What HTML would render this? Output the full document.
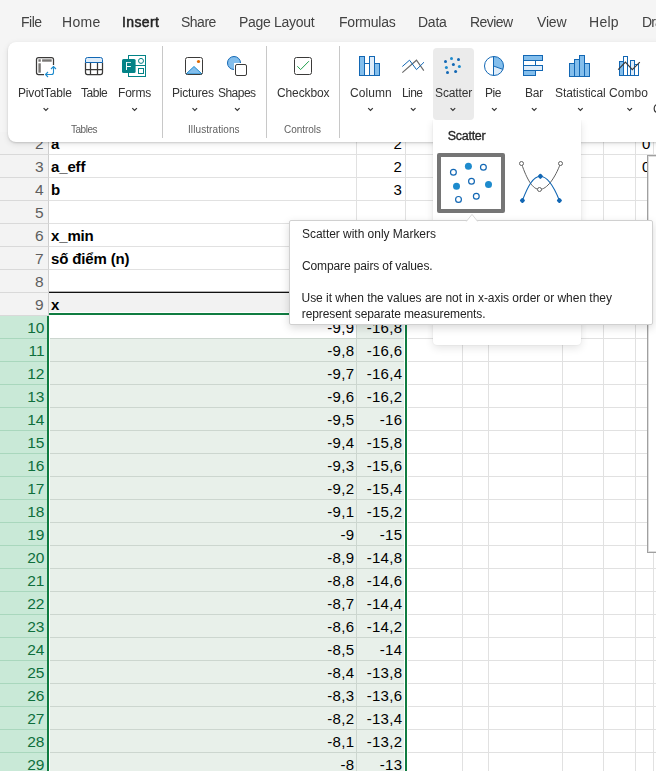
<!DOCTYPE html><html lang="vi"><head><meta charset="utf-8"><title>Excel</title><style>
*{box-sizing:border-box;margin:0;padding:0}
html,body{width:656px;height:771px;overflow:hidden;background:#f5f5f5;font-family:"Liberation Sans",sans-serif;}
body{position:relative}
.abs{position:absolute}
.t{position:absolute;white-space:nowrap;line-height:1;transform-origin:0 0}
.tab,.lbl,.grp{will-change:transform}
.tab{position:absolute;top:14px;font-size:14px;line-height:16px;color:#424242;white-space:nowrap;transform-origin:0 50%}
.lbl{position:absolute;top:86px;font-size:12px;line-height:14px;color:#333;white-space:nowrap;transform-origin:0 50%}
.grp{position:absolute;top:124px;font-size:10px;line-height:12px;color:#616161;white-space:nowrap;transform-origin:0 50%}
.chev{position:absolute;top:107px;width:8px;height:5px}
.div{position:absolute;top:46px;width:1px;height:92px;background:#c8c8c8}
.ico{position:absolute}
.rh{position:absolute;left:0;width:49px;height:23px;font-size:15.5px;letter-spacing:0px;line-height:24px;text-align:right;padding-right:4.5px;color:#5e5e5e;background:#f3f3f3;border-bottom:1px solid #d9d9d9;border-right:1px solid #cfcfcf}
.rh.sel{width:48px;padding-right:3.5px;background:#c9e9d7;color:#0e6f3c;border-bottom:1px solid #a9d7bd;border-right:none}
.c{position:absolute;height:23px;font-size:15px;line-height:23px;color:#000;white-space:nowrap}
.c.r{letter-spacing:.28px}
.b{font-weight:bold;letter-spacing:-.15px}
.r{text-align:right}
.tip{position:absolute;font-size:12px;line-height:16px;color:#242424;white-space:nowrap;transform-origin:0 50%}
</style></head><body>
<div class="abs" style="left:0;top:132px;width:656px;height:640px;background:#fff"></div>
<div class="abs" style="left:49px;top:293px;width:357px;height:22px;background:#f2f2f2"></div>
<div class="abs" style="left:50px;top:316px;width:354px;height:455px;background:#e8f0ea"></div>
<div class="abs" style="left:49px;top:316px;width:307px;height:22px;background:#fff"></div>
<div class="abs" style="left:356px;top:131px;width:1px;height:640px;background:#e1e1e1"></div>
<div class="abs" style="left:405px;top:131px;width:1px;height:640px;background:#e1e1e1"></div>
<div class="abs" style="left:462px;top:131px;width:1px;height:640px;background:#e1e1e1"></div>
<div class="abs" style="left:488px;top:131px;width:1px;height:640px;background:#e1e1e1"></div>
<div class="abs" style="left:562px;top:131px;width:1px;height:640px;background:#e1e1e1"></div>
<div class="abs" style="left:603px;top:131px;width:1px;height:640px;background:#e1e1e1"></div>
<div class="abs" style="left:635px;top:131px;width:1px;height:640px;background:#e1e1e1"></div>
<div class="abs" style="left:653px;top:131px;width:1px;height:640px;background:#e1e1e1"></div>
<div class="abs" style="left:49px;top:154px;width:607px;height:1px;background:#e1e1e1"></div>
<div class="abs" style="left:49px;top:177px;width:607px;height:1px;background:#e1e1e1"></div>
<div class="abs" style="left:49px;top:200px;width:607px;height:1px;background:#e1e1e1"></div>
<div class="abs" style="left:49px;top:223px;width:607px;height:1px;background:#e1e1e1"></div>
<div class="abs" style="left:49px;top:246px;width:607px;height:1px;background:#e1e1e1"></div>
<div class="abs" style="left:49px;top:269px;width:607px;height:1px;background:#e1e1e1"></div>
<div class="abs" style="left:49px;top:292px;width:607px;height:1px;background:#e1e1e1"></div>
<div class="abs" style="left:49px;top:315px;width:607px;height:1px;background:#e1e1e1"></div>
<div class="abs" style="left:49px;top:338px;width:607px;height:1px;background:#e1e1e1"></div>
<div class="abs" style="left:49px;top:361px;width:607px;height:1px;background:#e1e1e1"></div>
<div class="abs" style="left:49px;top:384px;width:607px;height:1px;background:#e1e1e1"></div>
<div class="abs" style="left:49px;top:407px;width:607px;height:1px;background:#e1e1e1"></div>
<div class="abs" style="left:49px;top:430px;width:607px;height:1px;background:#e1e1e1"></div>
<div class="abs" style="left:49px;top:453px;width:607px;height:1px;background:#e1e1e1"></div>
<div class="abs" style="left:49px;top:476px;width:607px;height:1px;background:#e1e1e1"></div>
<div class="abs" style="left:49px;top:499px;width:607px;height:1px;background:#e1e1e1"></div>
<div class="abs" style="left:49px;top:522px;width:607px;height:1px;background:#e1e1e1"></div>
<div class="abs" style="left:49px;top:545px;width:607px;height:1px;background:#e1e1e1"></div>
<div class="abs" style="left:49px;top:568px;width:607px;height:1px;background:#e1e1e1"></div>
<div class="abs" style="left:49px;top:591px;width:607px;height:1px;background:#e1e1e1"></div>
<div class="abs" style="left:49px;top:614px;width:607px;height:1px;background:#e1e1e1"></div>
<div class="abs" style="left:49px;top:637px;width:607px;height:1px;background:#e1e1e1"></div>
<div class="abs" style="left:49px;top:660px;width:607px;height:1px;background:#e1e1e1"></div>
<div class="abs" style="left:49px;top:683px;width:607px;height:1px;background:#e1e1e1"></div>
<div class="abs" style="left:49px;top:706px;width:607px;height:1px;background:#e1e1e1"></div>
<div class="abs" style="left:49px;top:729px;width:607px;height:1px;background:#e1e1e1"></div>
<div class="abs" style="left:49px;top:752px;width:607px;height:1px;background:#e1e1e1"></div>
<div class="abs" style="left:50px;top:338px;width:354px;height:1px;background:#ccd6cf"></div>
<div class="abs" style="left:50px;top:361px;width:354px;height:1px;background:#ccd6cf"></div>
<div class="abs" style="left:50px;top:384px;width:354px;height:1px;background:#ccd6cf"></div>
<div class="abs" style="left:50px;top:407px;width:354px;height:1px;background:#ccd6cf"></div>
<div class="abs" style="left:50px;top:430px;width:354px;height:1px;background:#ccd6cf"></div>
<div class="abs" style="left:50px;top:453px;width:354px;height:1px;background:#ccd6cf"></div>
<div class="abs" style="left:50px;top:476px;width:354px;height:1px;background:#ccd6cf"></div>
<div class="abs" style="left:50px;top:499px;width:354px;height:1px;background:#ccd6cf"></div>
<div class="abs" style="left:50px;top:522px;width:354px;height:1px;background:#ccd6cf"></div>
<div class="abs" style="left:50px;top:545px;width:354px;height:1px;background:#ccd6cf"></div>
<div class="abs" style="left:50px;top:568px;width:354px;height:1px;background:#ccd6cf"></div>
<div class="abs" style="left:50px;top:591px;width:354px;height:1px;background:#ccd6cf"></div>
<div class="abs" style="left:50px;top:614px;width:354px;height:1px;background:#ccd6cf"></div>
<div class="abs" style="left:50px;top:637px;width:354px;height:1px;background:#ccd6cf"></div>
<div class="abs" style="left:50px;top:660px;width:354px;height:1px;background:#ccd6cf"></div>
<div class="abs" style="left:50px;top:683px;width:354px;height:1px;background:#ccd6cf"></div>
<div class="abs" style="left:50px;top:706px;width:354px;height:1px;background:#ccd6cf"></div>
<div class="abs" style="left:50px;top:729px;width:354px;height:1px;background:#ccd6cf"></div>
<div class="abs" style="left:50px;top:752px;width:354px;height:1px;background:#ccd6cf"></div>
<div class="abs" style="left:356px;top:316px;width:1px;height:455px;background:#ccd6cf"></div>
<div class="abs" style="left:49px;top:291px;width:357px;height:1px;background:rgba(0,0,0,.3)"></div>
<div class="abs" style="left:49px;top:292px;width:357px;height:1px;background:#111"></div>
<div class="abs" style="left:49px;top:312px;width:359px;height:1px;background:#fff"></div>
<div class="abs" style="left:49px;top:315px;width:356px;height:1px;background:#fff"></div>
<div class="abs" style="left:407px;top:312px;width:1px;height:459px;background:#fff"></div>
<div class="abs" style="left:49px;top:313px;width:358px;height:2px;background:#107c41"></div>
<div class="abs" style="left:405px;top:313px;width:2px;height:458px;background:#107c41"></div>
<div class="abs" style="left:404px;top:315px;width:1px;height:456px;background:#fff"></div>
<div class="rh" style="top:132px">2</div>
<div class="rh" style="top:155px">3</div>
<div class="rh" style="top:178px">4</div>
<div class="rh" style="top:201px">5</div>
<div class="rh" style="top:224px">6</div>
<div class="rh" style="top:247px">7</div>
<div class="rh" style="top:270px">8</div>
<div class="rh" style="top:293px">9</div>
<div class="rh sel" style="top:316px">10</div>
<div class="rh sel" style="top:339px">11</div>
<div class="rh sel" style="top:362px">12</div>
<div class="rh sel" style="top:385px">13</div>
<div class="rh sel" style="top:408px">14</div>
<div class="rh sel" style="top:431px">15</div>
<div class="rh sel" style="top:454px">16</div>
<div class="rh sel" style="top:477px">17</div>
<div class="rh sel" style="top:500px">18</div>
<div class="rh sel" style="top:523px">19</div>
<div class="rh sel" style="top:546px">20</div>
<div class="rh sel" style="top:569px">21</div>
<div class="rh sel" style="top:592px">22</div>
<div class="rh sel" style="top:615px">23</div>
<div class="rh sel" style="top:638px">24</div>
<div class="rh sel" style="top:661px">25</div>
<div class="rh sel" style="top:684px">26</div>
<div class="rh sel" style="top:707px">27</div>
<div class="rh sel" style="top:730px">28</div>
<div class="rh sel" style="top:753px">29</div>
<div class="abs" style="left:47px;top:316px;width:2px;height:455px;background:#107c41"></div>
<div class="abs" style="left:49px;top:338px;width:1px;height:433px;background:#fff"></div>
<div class="c b" style="left:51px;top:132px">a</div>
<div class="c b" style="left:51px;top:155px">a_eff</div>
<div class="c b" style="left:51px;top:178px">b</div>
<div class="c b" style="left:51px;top:224px">x_min</div>
<div class="c b" style="left:51px;top:247px">số điểm (n)</div>
<div class="c b" style="left:51px;top:293px">x</div>
<div class="c r" style="left:357px;width:45px;top:132px">2</div>
<div class="c r" style="left:357px;width:45px;top:155px">2</div>
<div class="c r" style="left:357px;width:45px;top:178px">3</div>
<div class="c" style="left:642px;top:132px">0</div>
<div class="c" style="left:642px;top:155px">0</div>
<div class="c r" style="left:257px;width:97.3px;top:316px">-9,9</div>
<div class="c r" style="left:357px;width:45.3px;top:316px">-16,8</div>
<div class="c r" style="left:257px;width:97.3px;top:339px">-9,8</div>
<div class="c r" style="left:357px;width:45.3px;top:339px">-16,6</div>
<div class="c r" style="left:257px;width:97.3px;top:362px">-9,7</div>
<div class="c r" style="left:357px;width:45.3px;top:362px">-16,4</div>
<div class="c r" style="left:257px;width:97.3px;top:385px">-9,6</div>
<div class="c r" style="left:357px;width:45.3px;top:385px">-16,2</div>
<div class="c r" style="left:257px;width:97.3px;top:408px">-9,5</div>
<div class="c r" style="left:357px;width:45.3px;top:408px">-16</div>
<div class="c r" style="left:257px;width:97.3px;top:431px">-9,4</div>
<div class="c r" style="left:357px;width:45.3px;top:431px">-15,8</div>
<div class="c r" style="left:257px;width:97.3px;top:454px">-9,3</div>
<div class="c r" style="left:357px;width:45.3px;top:454px">-15,6</div>
<div class="c r" style="left:257px;width:97.3px;top:477px">-9,2</div>
<div class="c r" style="left:357px;width:45.3px;top:477px">-15,4</div>
<div class="c r" style="left:257px;width:97.3px;top:500px">-9,1</div>
<div class="c r" style="left:357px;width:45.3px;top:500px">-15,2</div>
<div class="c r" style="left:257px;width:97.3px;top:523px">-9</div>
<div class="c r" style="left:357px;width:45.3px;top:523px">-15</div>
<div class="c r" style="left:257px;width:97.3px;top:546px">-8,9</div>
<div class="c r" style="left:357px;width:45.3px;top:546px">-14,8</div>
<div class="c r" style="left:257px;width:97.3px;top:569px">-8,8</div>
<div class="c r" style="left:357px;width:45.3px;top:569px">-14,6</div>
<div class="c r" style="left:257px;width:97.3px;top:592px">-8,7</div>
<div class="c r" style="left:357px;width:45.3px;top:592px">-14,4</div>
<div class="c r" style="left:257px;width:97.3px;top:615px">-8,6</div>
<div class="c r" style="left:357px;width:45.3px;top:615px">-14,2</div>
<div class="c r" style="left:257px;width:97.3px;top:638px">-8,5</div>
<div class="c r" style="left:357px;width:45.3px;top:638px">-14</div>
<div class="c r" style="left:257px;width:97.3px;top:661px">-8,4</div>
<div class="c r" style="left:357px;width:45.3px;top:661px">-13,8</div>
<div class="c r" style="left:257px;width:97.3px;top:684px">-8,3</div>
<div class="c r" style="left:357px;width:45.3px;top:684px">-13,6</div>
<div class="c r" style="left:257px;width:97.3px;top:707px">-8,2</div>
<div class="c r" style="left:357px;width:45.3px;top:707px">-13,4</div>
<div class="c r" style="left:257px;width:97.3px;top:730px">-8,1</div>
<div class="c r" style="left:357px;width:45.3px;top:730px">-13,2</div>
<div class="c r" style="left:257px;width:97.3px;top:753px">-8</div>
<div class="c r" style="left:357px;width:45.3px;top:753px">-13</div>
<div class="abs" style="left:647px;top:155px;width:20px;height:398px;background:#fff;border:1px solid #a0a0a0;box-shadow:inset 0 0 0 1px rgba(0,0,0,.13)"></div>
<div class="tab" style="left:21.00px;letter-spacing:-0.500px;">File</div>
<div class="tab" style="left:62.40px;letter-spacing:0.283px;">Home</div>
<div class="tab" style="left:121.75px;letter-spacing:0.390px;color:#242424;-webkit-text-stroke:.5px #242424;">Insert</div>
<div class="tab" style="left:181.25px;letter-spacing:-0.500px;">Share</div>
<div class="tab" style="left:239.00px;letter-spacing:-0.300px;">Page Layout</div>
<div class="tab" style="left:338.80px;letter-spacing:-0.229px;">Formulas</div>
<div class="tab" style="left:418.00px;letter-spacing:-0.250px;">Data</div>
<div class="tab" style="left:470.20px;letter-spacing:-0.540px;">Review</div>
<div class="tab" style="left:537.05px;letter-spacing:-0.183px;">View</div>
<div class="tab" style="left:589.40px;letter-spacing:0.283px;">Help</div>
<div class="tab" style="left:642.40px;letter-spacing:-0.900px;">Draw</div>
<div class="abs" style="left:8px;top:42px;width:700px;height:100px;background:#fff;border-radius:8px;box-shadow:0 1px 2px rgba(0,0,0,.14),0 2px 6px rgba(0,0,0,.10)"></div>
<div class="abs" style="left:433px;top:48px;width:41px;height:72px;background:#ebebeb;border-radius:4px"></div>
<div class="div" style="left:162px"></div>
<div class="div" style="left:266px"></div>
<div class="div" style="left:339px"></div>
<div class="lbl" style="left:17.50px;letter-spacing:-0.167px;">PivotTable</div>
<div class="lbl" style="left:81.25px;letter-spacing:-0.475px;">Table</div>
<div class="lbl" style="left:117.50px;letter-spacing:-0.200px;">Forms</div>
<div class="lbl" style="left:172.30px;letter-spacing:-0.200px;">Pictures</div>
<div class="lbl" style="left:218.00px;letter-spacing:-0.530px;">Shapes</div>
<div class="lbl" style="left:276.50px;letter-spacing:-0.121px;">Checkbox</div>
<div class="lbl" style="left:349.70px;letter-spacing:0.050px;">Column</div>
<div class="lbl" style="left:402.40px;letter-spacing:-0.583px;">Line</div>
<div class="lbl" style="left:434.60px;letter-spacing:-0.108px;">Scatter</div>
<div class="lbl" style="left:485.40px;letter-spacing:-0.450px;">Pie</div>
<div class="lbl" style="left:524.70px;letter-spacing:-0.250px;">Bar</div>
<div class="lbl" style="left:555.10px;letter-spacing:-0.060px;">Statistical</div>
<div class="lbl" style="left:609.40px;letter-spacing:0.088px;">Combo</div>
<div class="lbl" style="left:652.5px;top:102px">C</div>
<div class="grp" style="left:71.45px;letter-spacing:-0.480px;">Tables</div>
<div class="grp" style="left:188.30px;letter-spacing:0.087px;">Illustrations</div>
<div class="grp" style="left:284.30px;letter-spacing:-0.043px;">Controls</div>
<svg class="ico" style="left:0;top:0" width="656" height="160" viewBox="0 0 656 160">
<path d="M43.6 108.2 L45.9 110.5 L48.2 108.2" fill="none" stroke="#333" stroke-width="1.2"/>
<path d="M132.3 108.2 L134.6 110.5 L136.9 108.2" fill="none" stroke="#333" stroke-width="1.2"/>
<path d="M192.5 108.2 L194.8 110.5 L197.1 108.2" fill="none" stroke="#333" stroke-width="1.2"/>
<path d="M235.0 108.2 L237.3 110.5 L239.6 108.2" fill="none" stroke="#333" stroke-width="1.2"/>
<path d="M368.2 108.2 L370.5 110.5 L372.8 108.2" fill="none" stroke="#333" stroke-width="1.2"/>
<path d="M410.9 108.2 L413.2 110.5 L415.5 108.2" fill="none" stroke="#333" stroke-width="1.2"/>
<path d="M450.6 108.2 L452.9 110.5 L455.2 108.2" fill="none" stroke="#333" stroke-width="1.2"/>
<path d="M492.0 108.2 L494.3 110.5 L496.6 108.2" fill="none" stroke="#333" stroke-width="1.2"/>
<path d="M531.9 108.2 L534.2 110.5 L536.5 108.2" fill="none" stroke="#333" stroke-width="1.2"/>
<path d="M578.1 108.2 L580.4 110.5 L582.7 108.2" fill="none" stroke="#333" stroke-width="1.2"/>
<path d="M627.4 108.2 L629.7 110.5 L632.0 108.2" fill="none" stroke="#333" stroke-width="1.2"/>
<path d="M53.5 65 V59.5 a2 2 0 0 0 -2 -2 H38.5 a2 2 0 0 0 -2 2 V72.5 a2 2 0 0 0 2 2 H44" fill="none" stroke="#3b3a39" stroke-width="1.25"/>
<rect x="38.4" y="59.3" width="2.4" height="2.4" fill="#797775"/><rect x="42.1" y="59.3" width="9.6" height="2.4" fill="#797775"/><rect x="38.4" y="63.3" width="2.4" height="9.4" fill="#797775"/>
<path d="M53.5 66.5 V72.5 a2 2 0 0 1 -2 2 H46 M51 69 L53.5 66.5 L56 69 M48 72 L45.5 74.5 L48 77" fill="none" stroke="#1e8bcd" stroke-width="1.1"/>
<path d="M85.5 62.5 V72.5 a2 2 0 0 0 2 2 H100.5 a2 2 0 0 0 2 -2 V62.5 M90.5 62.5 V74.5 M97.5 62.5 V74.5 M85.5 69.5 H102.5" fill="none" stroke="#3b3a39" stroke-width="1.25"/>
<path d="M85.5 62.5 V59.5 a2 2 0 0 1 2 -2 H100.5 a2 2 0 0 1 2 2 V62.5 Z" fill="#deecf9" stroke="#1267b4" stroke-width="1"/>
<rect x="128.5" y="55.5" width="17" height="21" fill="#fff" stroke="#038387" stroke-width="1"/>
<path d="M135 65.5 H145.5" stroke="#038387" stroke-width="1" fill="none"/>
<circle cx="141" cy="60.9" r="2.5" fill="none" stroke="#038387" stroke-width="1"/>
<rect x="138.5" y="68.5" width="5" height="5" fill="none" stroke="#038387" stroke-width="1"/>
<rect x="122" y="59" width="13.6" height="14" rx="1.5" fill="#038387"/>
<text x="125.2" y="70" font-family="Liberation Sans, sans-serif" font-size="11.3" textLength="6.1" lengthAdjust="spacingAndGlyphs" fill="#fff">F</text>
<path d="M186 74 L194 66.5 L202 74 Z" fill="#83beec" stroke="#1e8bcd" stroke-width="1" stroke-linejoin="round"/>
<rect x="185.5" y="57.5" width="17" height="17" rx="2" fill="none" stroke="#3b3a39" stroke-width="1"/>
<circle cx="198.5" cy="61.5" r="1.6" fill="#e06a00"/>
<circle cx="234" cy="63" r="6.5" fill="#83beec" stroke="#1267b4" stroke-width="1"/>
<rect x="234" y="63" width="14" height="14" fill="#fff"/>
<rect x="235.5" y="64.5" width="11" height="11" rx="1.5" fill="#fff" stroke="#3b3a39" stroke-width="1"/>
<rect x="294.5" y="57.5" width="17" height="17" rx="2" fill="none" stroke="#3b3a39" stroke-width="1"/>
<path d="M297.3 66.2 L300.6 69.6 L308.9 61.2" fill="none" stroke="#1e9e4a" stroke-width="1"/>
<rect x="359.5" y="56.5" width="5" height="19" fill="#83beec" stroke="#1267b4"/><rect x="364.5" y="63.5" width="5" height="12" fill="#fff" stroke="#1267b4"/><rect x="369.5" y="56.5" width="5" height="19" fill="#deecf9" stroke="#1267b4"/><rect x="374.5" y="63.5" width="5" height="12" fill="#83beec" stroke="#1267b4"/>
<path d="M402.3 72.6 L416.5 60.2 L423.8 70.6" fill="none" stroke="#6a6a6a" stroke-width="1.15"/>
<path d="M402.3 66.5 L409.5 60.2 L416.5 69.6 L424 62.2" fill="none" stroke="#1267b4" stroke-width="1"/>
<circle cx="451.5" cy="58.5" r="1.5" fill="#1e8bcd"/>
<circle cx="458.5" cy="59.4" r="1.5" fill="#1267b4"/>
<circle cx="445.5" cy="61.5" r="1.5" fill="#1267b4"/>
<circle cx="453.4" cy="64.4" r="1.5" fill="#1267b4"/>
<circle cx="446.4" cy="67.5" r="1.5" fill="#1e8bcd"/>
<circle cx="459.4" cy="66.6" r="1.5" fill="#1e8bcd"/>
<circle cx="447.5" cy="72.5" r="1.5" fill="#1267b4"/>
<circle cx="455.6" cy="71.6" r="1.5" fill="#1267b4"/>
<path d="M493.5 56.5 A9.5 9.5 0 0 1 502.9 69.4 L493.5 66 Z" fill="#83beec"/><path d="M502.9 69.4 A9.5 9.5 0 0 1 493.5 75.5 L493.5 66 Z" fill="#deecf9"/>
<circle cx="494" cy="66" r="9.5" fill="none" stroke="#1267b4" stroke-width="1"/><path d="M493.5 56.5 V75.5 M493.5 66 L502.9 69.4" fill="none" stroke="#1267b4" stroke-width="1"/>
<rect x="523.5" y="55.5" width="19" height="5" fill="#83beec" stroke="#1267b4"/><rect x="523.5" y="60.5" width="12" height="5" fill="#fff" stroke="#1267b4"/><rect x="523.5" y="65.5" width="19" height="5" fill="#deecf9" stroke="#1267b4"/><rect x="523.5" y="70.5" width="12" height="5" fill="#83beec" stroke="#1267b4"/>
<rect x="569.5" y="63.5" width="5" height="13" fill="#83beec" stroke="#1267b4"/><rect x="574.5" y="59.5" width="5" height="17" fill="#83beec" stroke="#1267b4"/><rect x="579.5" y="55.5" width="5" height="21" fill="#83beec" stroke="#1267b4"/><rect x="584.5" y="63.5" width="5" height="13" fill="#83beec" stroke="#1267b4"/>
<rect x="619.5" y="61.5" width="4" height="14" fill="#83beec" stroke="#1267b4"/><rect x="623.5" y="56.5" width="4" height="19" fill="#fff" stroke="#1267b4"/><rect x="630.5" y="60.5" width="4" height="15" fill="#deecf9" stroke="#1267b4"/><rect x="634.5" y="64.5" width="4" height="11" fill="#fff" stroke="#1267b4"/><path d="M627.5 75.5 H630.5" stroke="#1267b4"/>
<path d="M618.2 69.6 L625.4 62.1 L632.3 69.6 L639.8 62.1" fill="none" stroke="#3b3a39" stroke-width="1.2"/>
</svg>
<div class="abs" style="left:433px;top:120px;width:148px;height:225px;background:#fff;border-radius:0 0 4px 4px;box-shadow:0 3px 9px rgba(0,0,0,.11),0 0 2px rgba(0,0,0,.09);clip-path:inset(0 -30px -30px -30px)"></div>
<div class="t" style="left:447.70px;letter-spacing:-0.267px;top:129px;font-size:12.5px;line-height:14px;color:#242424;-webkit-text-stroke:.3px #242424">Scatter</div>
<div class="abs" style="left:437px;top:153px;width:68px;height:60px;border:4px solid #757575;border-radius:2px;background:#fff"></div>
<svg class="ico" style="left:433px;top:120px" width="160" height="100" viewBox="433 120 160 100">
<circle cx="468.4" cy="166.3" r="3.5" fill="#1e8bcd"/>
<circle cx="483.4" cy="167.3" r="2.9" fill="#fff" stroke="#1267b4" stroke-width="1.2"/>
<circle cx="453.4" cy="172.3" r="2.9" fill="#fff" stroke="#1267b4" stroke-width="1.2"/>
<circle cx="471.5" cy="181.3" r="2.9" fill="#fff" stroke="#1267b4" stroke-width="1.2"/>
<circle cx="456.5" cy="186.2" r="3.5" fill="#1e8bcd"/>
<circle cx="488.5" cy="184.4" r="3.5" fill="#1e8bcd"/>
<circle cx="458.5" cy="199.4" r="2.9" fill="#fff" stroke="#1267b4" stroke-width="1.2"/>
<circle cx="476.3" cy="196.3" r="2.9" fill="#fff" stroke="#1267b4" stroke-width="1.2"/>
<path d="M521.5 163.5 C527 180 533 189.5 539.5 189.5 C547 189.5 555 178 560.5 163.5" fill="none" stroke="#616161" stroke-width="1"/>
<path d="M522.4 200.5 C528 186 533 176.5 540.4 176.3 C548 176.5 554 187 559.4 200.5" fill="none" stroke="#1267b4" stroke-width="1.1"/>
<circle cx="521.5" cy="163.5" r="2" fill="#fff" stroke="#616161" stroke-width="1"/>
<circle cx="560.5" cy="163.5" r="2" fill="#fff" stroke="#616161" stroke-width="1"/>
<circle cx="539.5" cy="189.5" r="2" fill="#fff" stroke="#616161" stroke-width="1"/>
<rect x="520.3" y="198.4" width="4.2" height="4.2" rx="1.1" transform="rotate(45 522.4 200.5)" fill="#1267b4"/>
<rect x="557.3" y="198.4" width="4.2" height="4.2" rx="1.1" transform="rotate(45 559.4 200.5)" fill="#1267b4"/>
<rect x="538.3" y="174.2" width="4.2" height="4.2" rx="1.1" transform="rotate(45 540.4 176.3)" fill="#1267b4"/>
</svg>
<div class="abs" style="left:289px;top:220px;width:364px;height:105px;background:#fff;border:1px solid #d0d0d0;border-radius:2px;box-shadow:0 3px 8px rgba(0,0,0,.15)"></div>
<svg class="ico" style="left:462px;top:213px" width="20" height="9" viewBox="0 0 20 9"><path d="M4.3 8.5 L10 1.4 L15.7 8.5" fill="#fff" stroke="#d9d9d9" stroke-width="1"/><rect x="5" y="8" width="10" height="1" fill="#fff"/></svg>
<div class="tip" style="left:302.00px;letter-spacing:-0.031px;top:226px">Scatter with only Markers</div>
<div class="tip" style="left:302.00px;letter-spacing:-0.120px;top:258px">Compare pairs of values.</div>
<div class="tip" style="left:301.50px;letter-spacing:-0.030px;top:290px">Use it when the values are not in x-axis order or when they</div>
<div class="tip" style="left:301.75px;letter-spacing:-0.097px;top:306px">represent separate measurements.</div>
</body></html>
